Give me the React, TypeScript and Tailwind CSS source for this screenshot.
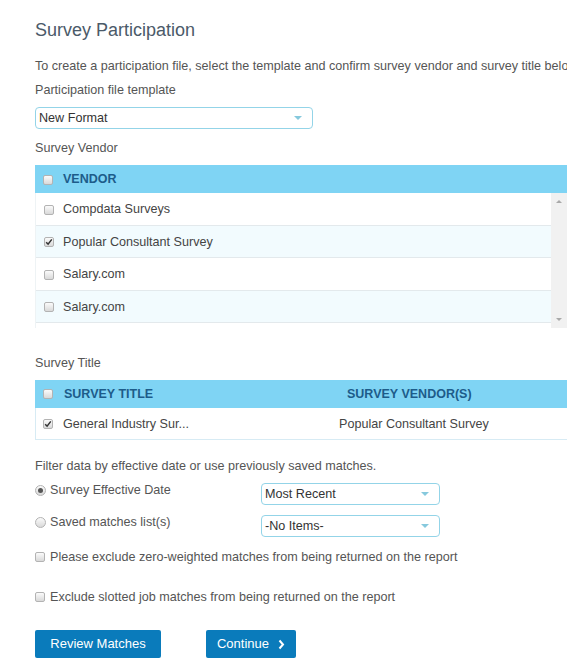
import type { ReactNode } from "react";

const vendors = [
  { name: "Compdata Surveys", checked: false },
  { name: "Popular Consultant Survey", checked: true },
  { name: "Salary.com", checked: false },
  { name: "Salary.com", checked: false },
  { name: "", checked: false },
];

export default function App() {
  return (
    <div className="h-[665px] w-[567px] overflow-hidden bg-white pl-[35px] font-['Liberation_Sans',Arial,sans-serif] text-[12.6px] text-[#555]">
      <h1 className="mt-[18px] h-[24px] text-[18px] leading-[24px] text-[#4b5a69]">Survey Participation</h1>
      <p className="mt-[15px] whitespace-nowrap leading-[18px]">
        To create a participation file, select the template and confirm survey vendor and survey title below.
      </p>
      <div className="mt-[6px] leading-[18px]">Participation file template</div>
      <Select className="mt-[8px] w-[278px]" value="New Format" />

      <div className="mt-[10px] leading-[18px]">Survey Vendor</div>
      <div className="mt-[8px] w-[532px]">
        <div className="flex h-[28px] items-center bg-[#7fd4f4] pl-[8px] pt-[1px]">
          <Checkbox />
          <span className="ml-[10px] text-[12.5px] font-bold text-[#1d5c8a]">VENDOR</span>
        </div>
        <div className="flex h-[135px] overflow-hidden">
          <ul className="flex-1 border-l border-[#eef3f5]">
            {vendors.map((v, i) => (
              <li
                key={i}
                className={`flex h-[32.5px] shrink-0 items-center border-b border-[#e3e9ec] pl-[8px] pt-[2px] ${
                  i % 2 === 1 ? "bg-[#f2fbfe]" : "bg-white"
                }`}
              >
                <Checkbox checked={v.checked} />
                <span className="ml-[9px] text-[#444]">{v.name}</span>
              </li>
            ))}
          </ul>
          <div className="flex w-[16px] flex-col items-center justify-between bg-[#f1f1f1] py-[7px]">
            <span className="h-0 w-0 border-x-[3px] border-b-[3px] border-x-transparent border-b-[#a9a9a9]" />
            <span className="h-0 w-0 border-x-[3px] border-t-[3px] border-x-transparent border-t-[#a9a9a9]" />
          </div>
        </div>
      </div>

      <div className="mt-[26px] leading-[18px]">Survey Title</div>
      <div className="mt-[8px] w-[560px]">
        <div className="flex h-[28px] items-center bg-[#7fd4f4] pl-[8px] text-[12.5px] font-bold text-[#1d5c8a]">
          <Checkbox />
          <span className="ml-[11px] w-[283px]">SURVEY TITLE</span>
          <span>SURVEY VENDOR(S)</span>
        </div>
        <div className="flex h-[32px] items-center border-b border-l border-[#d7ebf4] pl-[7px] pt-[1px] text-[#444]">
          <Checkbox checked />
          <span className="ml-[10px] w-[276px]">General Industry Sur...</span>
          <span>Popular Consultant Survey</span>
        </div>
      </div>

      <div className="mt-[17px] leading-[18px]">Filter data by effective date or use previously saved matches.</div>
      <Row className="mt-[8px]" label={<><Radio checked /><span className="ml-[4px]">Survey Effective Date</span></>}>
        <Select className="w-[179px]" value="Most Recent" />
      </Row>
      <Row className="mt-[10px]" label={<><Radio /><span className="ml-[4px]">Saved matches list(s)</span></>}>
        <Select className="w-[179px]" value="-No Items-" />
      </Row>

      <label className="mt-[11px] flex items-center leading-[18px]">
        <Checkbox />
        <span className="ml-[5px]">Please exclude zero-weighted matches from being returned on the report</span>
      </label>
      <label className="mt-[22px] flex items-center leading-[18px]">
        <Checkbox />
        <span className="ml-[5px]">Exclude slotted job matches from being returned on the report</span>
      </label>

      <div className="mt-[24px] flex gap-[45px]">
        <button className="h-[28px] w-[126px] rounded-[2px] bg-[#0a7bbb] text-[13px] text-white">Review Matches</button>
        <button className="flex h-[28px] w-[90px] items-center justify-center gap-[9px] rounded-[2px] bg-[#0a7bbb] text-[13px] text-white">
          Continue
          <svg width="7" height="11" viewBox="0 0 7 11" aria-hidden="true">
            <path d="M1.5 1.5 L5 5.5 L1.5 9.5" fill="none" stroke="white" strokeWidth="2" />
          </svg>
        </button>
      </div>
    </div>
  );
}

function Row({ label, children, className = "" }: { label: ReactNode; children: ReactNode; className?: string }) {
  return (
    <div className={`flex items-start ${className}`}>
      <div className="-mt-[2px] flex h-[18px] w-[226px] items-center leading-[18px]">{label}</div>
      {children}
    </div>
  );
}

function Select({ value, className = "" }: { value: string; className?: string }) {
  return (
    <div
      className={`flex h-[22px] items-center justify-between rounded-[4px] border border-[#93d4e8] bg-white pl-[3px] pr-[10px] text-[12.6px] text-[#333] ${className}`}
    >
      <span>{value}</span>
      <span className="h-0 w-0 border-x-[4px] border-t-[4px] border-x-transparent border-t-[#86c9dd]" />
    </div>
  );
}

function Checkbox({ checked = false }: { checked?: boolean }) {
  return (
    <span className="flex h-[10px] w-[10px] shrink-0 items-center justify-center rounded-[2px] border border-[#b3b3b3] bg-gradient-to-b from-[#fbfbfb] to-[#d9d9d9]">
      {checked && (
        <svg width="8" height="8" viewBox="0 0 8 8" aria-hidden="true">
          <path d="M1.2 4.2 L3.1 6.2 L6.8 1.4" fill="none" stroke="#333" strokeWidth="1.5" />
        </svg>
      )}
    </span>
  );
}

function Radio({ checked = false }: { checked?: boolean }) {
  return (
    <span className="flex h-[11px] w-[11px] shrink-0 items-center justify-center rounded-full border border-[#b3b3b3] bg-gradient-to-b from-[#fbfbfb] to-[#d9d9d9]">
      {checked && <span className="h-[5px] w-[5px] rounded-full bg-[#555]" />}
    </span>
  );
}
